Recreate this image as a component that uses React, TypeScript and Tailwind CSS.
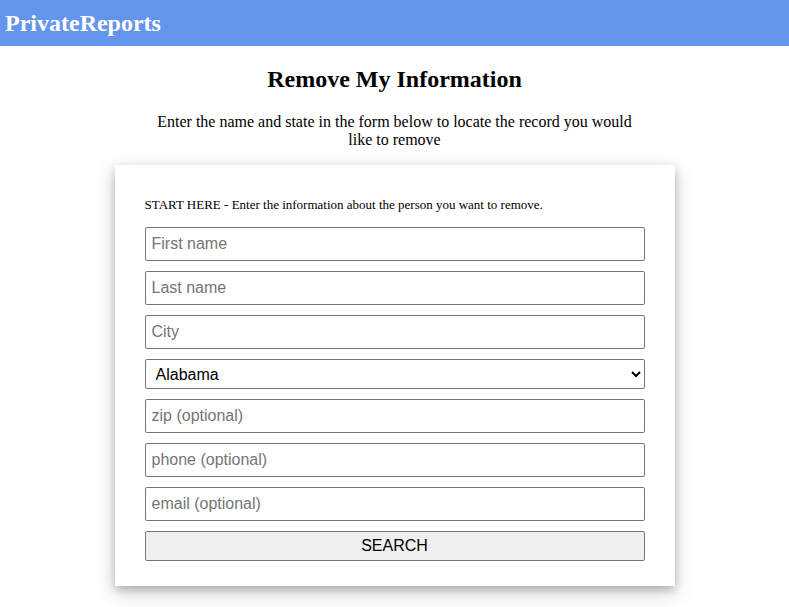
import { useState } from 'react';

const STATES = ['Alabama', 'Alaska', 'Arizona', 'Arkansas', 'California', 'Colorado', 'Connecticut', 'Delaware', 'Florida', 'Georgia'];

const inputClass =
    "block w-full h-[34px] px-[6px] border border-[#767676] rounded-[2px] bg-white text-[16px] text-black placeholder:text-[#757575] font-['Liberation_Sans',Arial,sans-serif] outline-none";

export default function App() {
    const [form, setForm] = useState({ first: '', last: '', city: '', state: 'Alabama', zip: '', phone: '', email: '' });

    const handleChange = (e: React.ChangeEvent<HTMLInputElement | HTMLSelectElement>) => {
        const { name, value } = e.target;
        setForm(prev => ({ ...prev, [name]: value }));
    };

    return (
        <div className="min-h-screen bg-white text-black font-['Liberation_Serif','Times_New_Roman',serif]">
            <header className="h-[46px] bg-[#6495ed] flex items-center pl-[5px]">
                <h1 className="text-[24px] font-bold text-white leading-none">PrivateReports</h1>
            </header>

            <main className="flex flex-col items-center">
                <h2 className="mt-[19px] text-[24px] font-bold leading-[28px]">Remove My Information</h2>
                <p className="mt-[20px] w-[500px] text-center text-[16px] leading-[18px]">
                    Enter the name and state in the form below to locate the record you would like to remove
                </p>

                <form
                    onSubmit={e => e.preventDefault()}
                    className="mt-[16px] w-[560px] bg-white px-[30px] pt-[32px] pb-[25px] shadow-[0_4px_8px_0_rgba(0,0,0,0.2),0_6px_20px_0_rgba(0,0,0,0.19)]"
                >
                    <p className="text-[13px] leading-[16px] mb-[14px]">
                        START HERE - Enter the information about the person you want to remove.
                    </p>
                    <div className="flex flex-col gap-[10px]">
                        <input name="first" value={form.first} onChange={handleChange} placeholder="First name" className={inputClass} />
                        <input name="last" value={form.last} onChange={handleChange} placeholder="Last name" className={inputClass} />
                        <input name="city" value={form.city} onChange={handleChange} placeholder="City" className={inputClass} />
                        <select
                            name="state"
                            value={form.state}
                            onChange={handleChange}
                            className="block w-full h-[30px] pl-[6px] pr-[4px] border border-[#767676] rounded-[2px] bg-white text-[16px] text-black font-['Liberation_Sans',Arial,sans-serif]"
                        >
                            {STATES.map(s => (
                                <option key={s} value={s}>{s}</option>
                            ))}
                        </select>
                        <input name="zip" value={form.zip} onChange={handleChange} placeholder="zip (optional)" className={inputClass} />
                        <input name="phone" value={form.phone} onChange={handleChange} placeholder="phone (optional)" className={inputClass} />
                        <input name="email" value={form.email} onChange={handleChange} placeholder="email (optional)" className={inputClass} />
                        <button
                            type="submit"
                            className="block w-full h-[30px] border border-[#767676] rounded-[2px] bg-[#efefef] text-[16px] text-black font-['Liberation_Sans',Arial,sans-serif]"
                        >
                            SEARCH
                        </button>
                    </div>
                </form>
            </main>
        </div>
    );
}
